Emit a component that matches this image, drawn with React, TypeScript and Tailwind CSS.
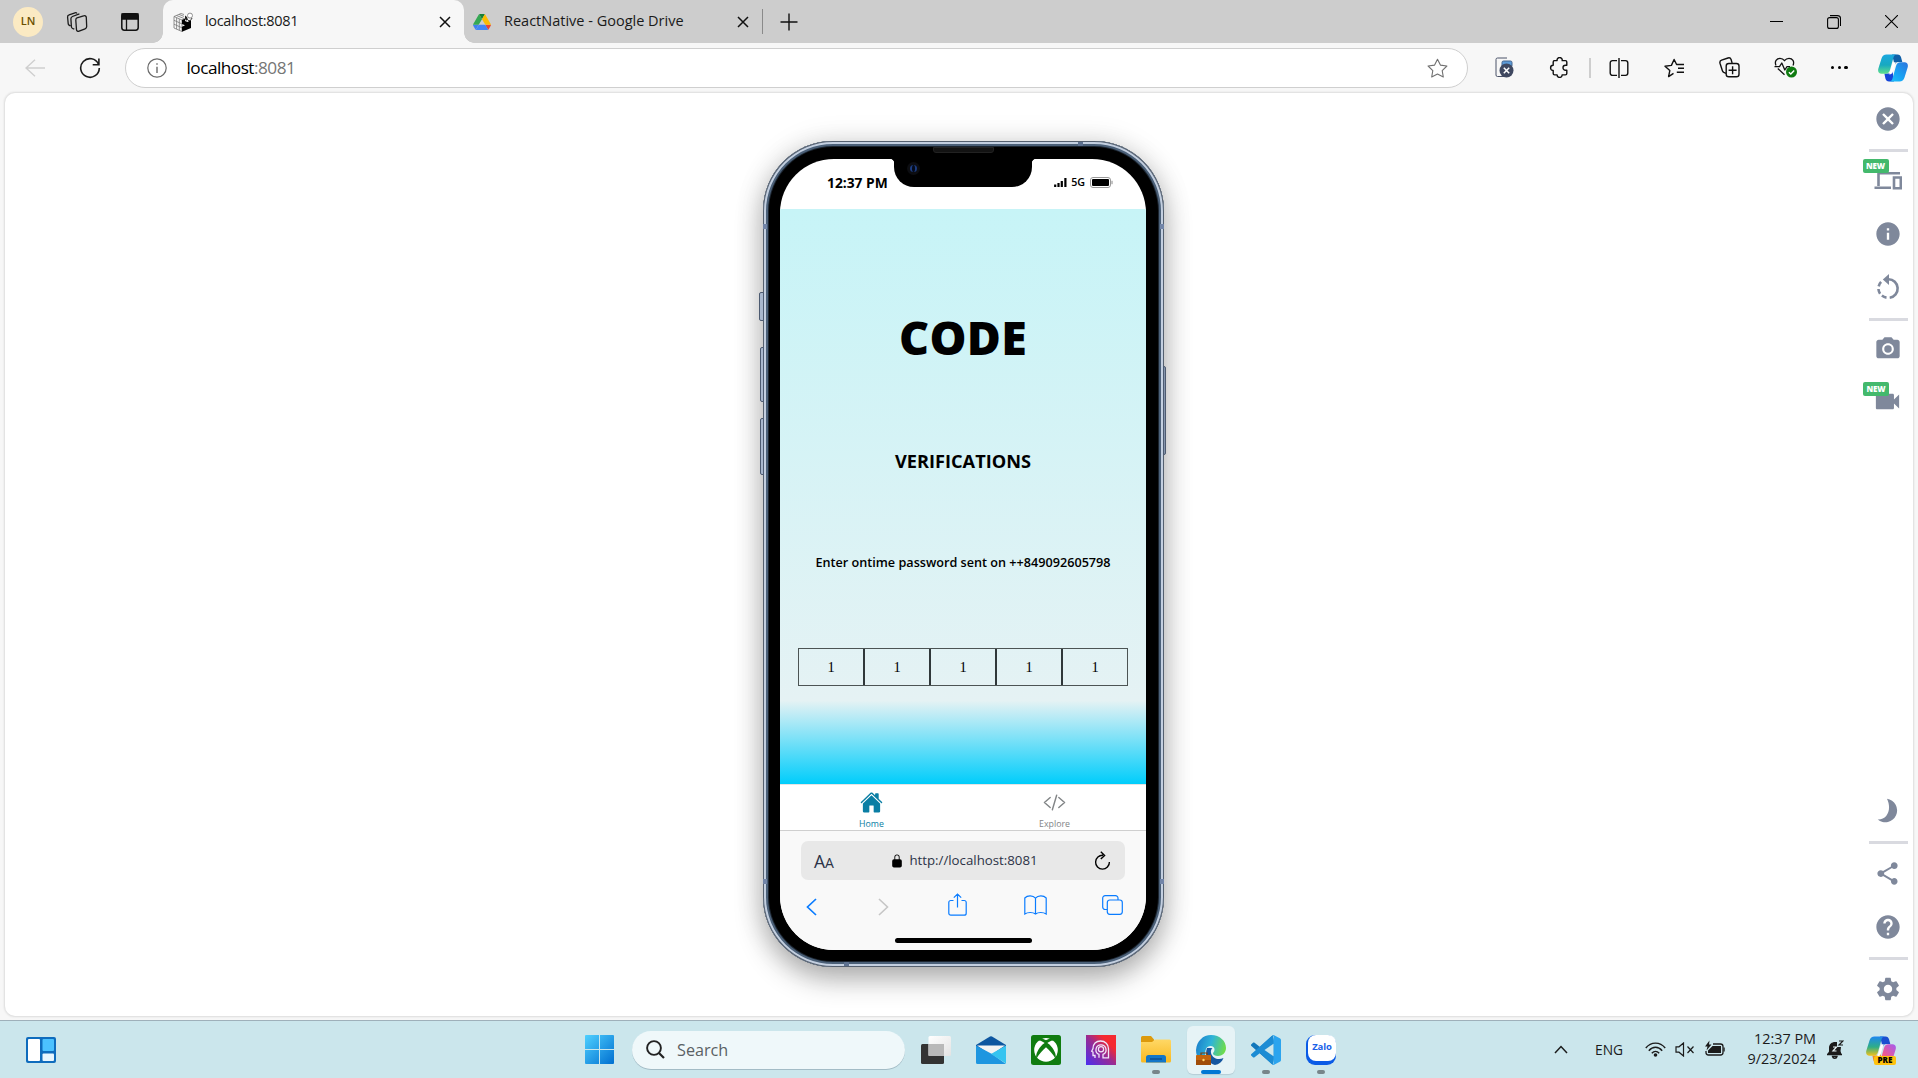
import React from "react";
import { MdCancel, MdInfo, MdCameraAlt, MdVideocam, MdShare, MdHelp, MdSettings } from "react-icons/md";
import { IoHome, IoCodeSlashOutline, IoLockClosed } from "react-icons/io5";

type SvgProps = { w: number; h: number; vb?: string; className?: string; children: React.ReactNode };
const Svg = ({ w, h, vb, className = "", children }: SvgProps) => (
  <svg width={w} height={h} viewBox={vb ?? `0 0 ${w} ${h}`} fill="none" className={`shrink-0 ${className}`}>
    {children}
  </svg>
);

const Spacer = () => <div className="flex-1" />;

function ExpoFavicon() {
  return (
    <Svg w={20} h={20}>
      <path d="M1 4.5 8 1.500l3 1M1 4.500 9 8v11.500L1 16zM1 8.300l8 3.600M1 12.200l8 3.600M3.600 5.800v11.300M6.300 7v11.400M3.500 3.500 11 6.500M6 2.400l5 2M9 8l3-1.500" stroke="#777" strokeWidth=".8" />
      <path d="M9 8l3.500-1.500L12 9l2.500 1 3.500-2v8l-9 3.800v-5l3-1.500-3-1.300z" fill="#000" />
      <circle cx="17" cy="3.600" r="2.500" fill="#fff" stroke="#777" strokeWidth=".8" />
      <path d="M12 3.500 14 5l1 3-2 .5-1-2z" fill="#222" />
      <path d="M15 8.300c1.200.8 3.400.2 4-2.300" stroke="#333" strokeWidth="1" />
    </Svg>
  );
}

function TabBar() {
  return (
    <div className="flex h-[43px] items-center bg-[#cdcdcd]">
      <div className="ml-[13px] flex size-[30px] items-center justify-center rounded-full bg-[#fbeac3] text-[11px] font-semibold text-[#6b5000]">LN</div>
      <Svg w={22} h={22} className="ml-[23px] mr-px">
        <path d="M11 6.200 17.500 4.400a1.800 1.800 0 0 1 2.800 1.400l.4 9.200a2.400 2.400 0 0 1-1.600 2.200l-6 2.400a1.800 1.800 0 0 1-2.600-1.500L9.800 8.700A2.600 2.600 0 0 1 11 6.200Z M8.300 17.600 6.600 16.900a2 2 0 0 1-1.200-1.700L4.900 7.200a2.400 2.400 0 0 1 1.500-2.300l7-2.600M4.400 14.300l-1.300-.8a2 2 0 0 1-.9-1.500L1.600 5.600a2.200 2.200 0 0 1 1.500-2.300L9 1.200a1.800 1.800 0 0 1 2 .7" stroke="#1b1b1b" strokeWidth="1.300" transform="translate(0 .6)" />
      </Svg>
      <Svg w={18} h={18} className="ml-[32px]">
        <rect x=".8" y=".8" width="16.400" height="16.400" rx="2.600" stroke="#111" strokeWidth="1.500" />
        <path d="M1 1h16v5H1zM5.500 5.500V17" fill="#111" stroke="#111" strokeWidth="1.300" />
      </Svg>
      <div className="relative ml-6 flex h-full w-[301px] items-center rounded-t-[10px] bg-[#f7f7f7] pl-[10px] pr-[13px]">
        <div className="absolute -left-2.5 bottom-0 size-2.5 bg-[radial-gradient(circle_at_0_0,transparent_9.5px,#f7f7f7_10px)]" />
        <div className="absolute -right-2.5 bottom-0 size-2.5 bg-[radial-gradient(circle_at_100%_0,transparent_9.5px,#f7f7f7_10px)]" />
        <ExpoFavicon />
        <span className="ml-3 mb-px text-[14.5px] tracking-[-0.33px] text-[#1a1a1a]">localhost:8081</span>
        <Spacer />
        <Svg w={12} h={12}><path d="m1 1 10 10M11 1 1 11" stroke="#111" strokeWidth="1.500" /></Svg>
      </div>
      <Svg w={18} h={16} vb="0 0 87.3 78" className="ml-[9px]">
        <path d="m6.600 66.850 3.850 6.650c.8 1.400 1.950 2.500 3.300 3.300l13.750-23.800H0c0 1.550.4 3.100 1.200 4.500z" fill="#3f7ff0" />
        <path d="M43.650 25 29.900 1.200c-1.350.8-2.500 1.900-3.300 3.300L1.200 48.500A9 9 0 0 0 0 53h27.500z" fill="#34a853" />
        <path d="M73.550 76.800c1.350-.8 2.500-1.900 3.300-3.300l1.600-2.750L86.100 57.500c.8-1.400 1.200-2.950 1.200-4.500H59.800l5.850 11.500z" fill="#ea4335" />
        <path d="M43.650 25 57.400 1.200C56.050.4 54.500 0 52.900 0H34.400c-1.600 0-3.150.45-4.500 1.200z" fill="#188038" />
        <path d="M59.800 53H27.500L13.750 76.800c1.350.8 2.900 1.200 4.500 1.200h50.800c1.600 0 3.150-.45 4.500-1.200z" fill="#4285f4" />
        <path d="m73.400 26.500-12.700-22c-.8-1.400-1.950-2.500-3.300-3.300L43.650 25 59.800 53h27.450c0-1.550-.4-3.100-1.200-4.500z" fill="#fbbc04" />
      </Svg>
      <span className="mb-px ml-[13px] w-[180px] whitespace-nowrap text-[14.5px] text-[#1a1a1a]">ReactNative - Google Drive</span>
      <Svg w={12} h={12} className="ml-[53px]"><path d="m1 1 10 10M11 1 1 11" stroke="#111" strokeWidth="1.500" /></Svg>
      <div className="ml-[13px] h-[25px] w-px bg-[#8a8a8a]" />
      <Svg w={18} h={18} className="ml-[17px]"><path d="M9 .5v17M.5 9h17" stroke="#111" strokeWidth="1.400" /></Svg>
      <Spacer />
      <Svg w={13} h={13}><path d="M0 6.500h13" stroke="#000" strokeWidth="1" /></Svg>
      <Svg w={14} h={14} className="ml-[44px]">
        <rect x=".6" y="2.600" width="10.800" height="10.800" rx="2" stroke="#000" strokeWidth="1.100" />
        <path d="M3 .6h7.500a3 3 0 0 1 3 3V11" stroke="#000" strokeWidth="1.100" />
      </Svg>
      <Svg w={13} h={13} className="ml-[44px] mr-[20px]"><path d="m0 0 13 13M13 0 0 13" stroke="#000" strokeWidth="1.100" /></Svg>
    </div>
  );
}

function Copilot({ pre = false }: { pre?: boolean }) {
  const id = pre ? "p" : "t";
  return (
    <Svg w={30} h={28} vb="0 0 30 28">
      <defs>
        <linearGradient id={`${id}a`} x1="0" y1="0" x2="0" y2="1">
          <stop stopColor={pre ? "#1d86f0" : "#1ba8e0"} /><stop offset=".55" stopColor={pre ? "#2fae86" : "#18a9c0"} /><stop offset="1" stopColor={pre ? "#f2c21a" : "#5fe08c"} />
        </linearGradient>
        <linearGradient id={`${id}b`} x1="1" y1="0" x2="0" y2="1">
          <stop stopColor={pre ? "#a35cf0" : "#2c74dd"} /><stop offset=".6" stopColor={pre ? "#f35a8c" : "#16a6f5"} /><stop offset="1" stopColor={pre ? "#ff9a50" : "#1ec5fa"} />
        </linearGradient>
      </defs>
      <path d="M14 .5h5.500c2 0 3 1.200 3.600 3l1.200 4.500h-4c-2 0-3 1-3.600 3z" fill={pre ? "#1a4fd0" : "#0f5fa8"} />
      <path d="M16 27.500h-5c-2 0-3-1.200-3.600-3L6.400 19.500h4.500c2 0 3-1 3.600-3z" fill={pre ? "#f08a2a" : "#1746d8"} />
      <path d="M8.500.5H19c-2 0-3 1.300-3.500 3L12 16c-.6 2.300-2 3.700-4.300 3.700H3.500C.8 19.700-.4 17.500.3 14.800L3.500 4.500C4.300 2 6 .5 8.500.5Z" fill={`url(#${id}a)`} />
      <path d="M21.500 27.500H11c2 0 3-1.300 3.500-3L18 12c.6-2.300 2-3.700 4.300-3.700h4.200c2.700 0 3.900 2.200 3.200 4.900L26.500 23.500c-.8 2.500-2.500 4-5 4Z" fill={`url(#${id}b)`} />
      <path d="m17.800 8.300-1.300 0c-1.300.3-2 1.300-2.400 2.700L12 18.500c-.3.800-.7 1.400-1.300 1.700h2c1.200-.3 1.800-1.300 2.200-2.700l2-7c.3-1 .5-1.600.9-2.200Z" fill="#fff" />
    </Svg>
  );
}

function Toolbar() {
  return (
    <div className="flex h-[49px] items-center bg-[#f7f7f7]">
      <Svg w={20} h={18} className="ml-[25px]"><path d="M10 .8 1 9l9 8.200M1 9h19" stroke="#cfcfcf" strokeWidth="1.400" /></Svg>
      <Svg w={22} h={22} className="ml-[34px]">
        <path d="M19.500 7.200A9.300 9.300 0 1 0 20.300 11M19.900 1.500v6.300h-6.200" stroke="#1a1a1a" strokeWidth="1.600" />
      </Svg>
      <div className="ml-[24px] mt-px flex h-10 w-[1343px] items-center rounded-full border border-[#cfcfcf] bg-white pl-[21px] pr-[19px]">
        <Svg w={20} h={20}>
          <circle cx="10" cy="10" r="9.200" stroke="#6a6a6a" strokeWidth="1.200" />
          <path d="M10 8.800V15M10 5.200v1.600" stroke="#6a6a6a" strokeWidth="1.400" />
        </Svg>
        <span className="ml-[19.5px] mb-px text-[17.2px] tracking-[-0.5px] text-black">localhost<span className="text-[#767676]">:8081</span></span>
        <Spacer />
        <Svg w={21} h={20} vb="0 0 21 20"><path d="m10.500 1.200 2.900 5.900 6.500.9-4.700 4.600 1.100 6.400-5.800-3-5.800 3 1.100-6.400L1.100 8l6.500-.9z" stroke="#707070" strokeWidth="1.100" strokeLinejoin="round" /></Svg>
      </div>
      <Svg w={19} h={21} className="ml-[27px]">
        <path d="M10 19.500H2.500a1.500 1.500 0 0 1-1.500-1.500V2.500A1.500 1.500 0 0 1 2.500 1H12" stroke="#4a5268" strokeWidth="1" />
        <rect x="7" y="4" width="10" height="6" rx="1.500" fill="#5c9bd8" stroke="#41628c" />
        <circle cx="11.500" cy="13.500" r="7" fill="#3f4860" />
        <path d="m8.800 10.800 5.400 5.400m0-5.400-5.400 5.400" stroke="#fff" strokeWidth="1.500" />
      </Svg>
      <Svg w={20} h={21} className="ml-[35px]">
        <path d="M4.500 3.600h3.600a2.600 2.600 0 1 1 5.100 0h3.200a1.400 1.400 0 0 1 1.400 1.400v3.200h-1.300a2.500 2.500 0 0 0 0 5h1.300v3.300a1.400 1.400 0 0 1-1.400 1.400h-3.300a2.500 2.500 0 1 1-5 0H5.600a1.400 1.400 0 0 1-1.400-1.400v-3a2.600 2.600 0 1 1 0-5.200V5a1.400 1.400 0 0 1 1.400-1.400" stroke="#111" strokeWidth="1.400" strokeLinejoin="round" />
      </Svg>
      <div className="ml-[20px] h-5 w-[2px] bg-[#cecece]" />
      <Svg w={20} h={20} className="ml-[18px]">
        <path d="M8 2.600H3.500A2.300 2.300 0 0 0 1.200 4.900v10.200a2.300 2.300 0 0 0 2.300 2.300H8M12 2.600h4.500a2.300 2.300 0 0 1 2.300 2.300v10.200a2.300 2.300 0 0 1-2.300 2.300H12M10 0v20" stroke="#111" strokeWidth="1.400" />
      </Svg>
      <Svg w={21} h={20} className="ml-[35px]">
        <path d="M9.500 15.300 4.600 18.600l1.200-6L1 8.200l6.400-.8L10.100 1.500l2.500 5H20M14 10.300h6M12.800 14.200H20" stroke="#111" strokeWidth="1.400" strokeLinejoin="round" />
      </Svg>
      <Svg w={21} h={21} className="ml-[34px]">
        <rect x="7.200" y="6.500" width="12.800" height="13.300" rx="2.600" stroke="#111" strokeWidth="1.400" />
        <path d="M13.600 9.200v8M9.600 13.200h8M7 16.300 4.800 15.400A3 3 0 0 1 3.400 13.700L1 6.200A2.500 2.500 0 0 1 2.600 3.200L9 1a2.500 2.500 0 0 1 3.100 1.500l1 3.500" stroke="#111" strokeWidth="1.400" />
      </Svg>
      <Svg w={24} h={21} className="ml-[34px]">
        <path d="M2 8.500C.2 4.500 2.700 1.300 6 1.300c2 0 3.500 1 4.500 2.400 1-1.400 2.500-2.400 4.500-2.400 3.400 0 5.800 3.200 4 7.200M3.800 11.500l6.700 6.300M.5 9.700h5L7.800 6l3 7 2.200-3.300h3" stroke="#111" strokeWidth="1.300" strokeLinejoin="round" />
        <circle cx="17.500" cy="15" r="5.500" fill="#0f7b10" />
        <path d="m14.900 15.200 1.900 1.800 3.400-3.600" stroke="#fff" strokeWidth="1.400" />
      </Svg>
      <div className="ml-[33px] flex gap-[3.5px]">
        <i className="size-[3.2px] rounded-full bg-black" /><i className="size-[3.2px] rounded-full bg-black" /><i className="size-[3.2px] rounded-full bg-black" />
      </div>
      <Spacer />
      <div className="mr-[10px]"><Copilot /></div>
    </div>
  );
}

function Notch() {
  return (
    <div className="absolute left-[114px] top-0 h-[28px] w-[138px] rounded-b-[20px] bg-black">
      <div className="absolute -left-[3px] top-0 size-[3px] bg-[radial-gradient(circle_at_0_100%,transparent_2.5px,#000_3px)]" />
      <div className="absolute -right-[3px] top-0 size-[3px] bg-[radial-gradient(circle_at_100%_100%,transparent_2.5px,#000_3px)]" />
      <div className="absolute left-[13px] top-[3px] flex size-[13px] items-center justify-center rounded-full bg-[#0c0d11]">
        <div className="size-[7px] rounded-full border-x-2 border-[#1c3c80] bg-[#050a18]" />
      </div>
    </div>
  );
}

function Screen() {
  return (
    <div className="relative flex h-[791px] w-[366px] flex-col overflow-hidden rounded-[54px] bg-white">
      <Notch />
      <div className="flex h-[50px] shrink-0 items-center pb-[3px] pl-[47px] pr-[33px] text-black">
        <span className="pt-px text-[13.8px] font-bold">12:37 PM</span>
        <Spacer />
        <Svg w={13} h={9}><path d="M1.200 9V6.500M4.500 9V5M7.800 9V3M11.400 9V0" stroke="#000" strokeWidth="2.200" /></Svg>
        <span className="ml-[4px] text-[10.7px] font-semibold">5G</span>
        <Svg w={23} h={11} className="ml-[5px]">
          <rect x=".5" y=".5" width="20" height="10" rx="2.500" stroke="#999" />
          <rect x="2" y="2" width="17" height="7" rx="1" fill="#000" />
          <path d="M22 3.800v3.400" stroke="#888" />
        </Svg>
      </div>
      <div className="flex h-[575px] shrink-0 flex-col items-center bg-[linear-gradient(#c7f4f7_0%,#e5f2f4_85.5%,#00cdfb_100%)] pt-[98px] text-black">
        <h1 className="flex h-[62px] items-center text-[46.5px] font-extrabold tracking-[0.3px]">CODE</h1>
        <h2 className="mt-[81px] flex h-6 items-center text-[18.2px] font-bold">VERIFICATIONS</h2>
        <p className="mt-[78px] flex h-5 items-center text-[12.65px] font-semibold">Enter ontime password sent on ++849092605798</p>
        <div className="mt-[76px] flex h-[38px] w-[330px] border border-[#4c5454] font-['Liberation_Serif',serif] text-[14.5px]">
          {[0, 1, 2, 3, 4].map((i) => (
            <div key={i} className="flex flex-1 items-center justify-center border-r-2 border-[#30383a] pt-px last:border-r-0">1</div>
          ))}
        </div>
      </div>
      <div className="flex h-[46px] shrink-0 border-t border-[#e4e4e4] bg-white text-[8.8px] leading-[12px]">
        <div className="flex flex-1 flex-col items-center pt-[6px] text-[#0a7ea4]"><IoHome size={25} /><span className="mt-[4px]">Home</span></div>
        <div className="flex flex-1 flex-col items-center pt-[6px] text-[#828587]"><IoCodeSlashOutline size={25} /><span className="mt-[4px]">Explore</span></div>
      </div>
      <div className="flex flex-1 flex-col items-center border-t border-[#cfcfcf] bg-[#f9f9f9]">
        <div className="mt-[10px] flex h-[39px] w-[324px] items-center rounded-[7px] bg-[#e8e8e8] pl-[13px] pr-[14px] text-[#2c3347]">
          <span className="pt-px text-[17.5px]">A<span className="text-[14px]">A</span></span>
          <Spacer />
          <IoLockClosed size={14} className="ml-[3px] text-black" />
          <span className="ml-[5px] pt-px text-[13.25px]">http://localhost:8081</span>
          <Spacer />
          <Svg w={17} h={20} className="ml-[3px]"><path d="M9 4.300A6.900 6.900 0 1 0 15.400 11M6.800.8l3.800 3.600-3.800 3.700" stroke="#000" strokeWidth="1.400" /></Svg>
        </div>
        <div className="mt-[13px] flex h-6 w-[318px] items-center pl-[2px] text-[#0a7cff]">
          <Svg w={11} h={18} className="mt-[3px]"><path d="M10 1 1.500 9l8.500 8" stroke="currentColor" strokeWidth="1.700" /></Svg>
          <Svg w={11} h={18} className="ml-[61px] mt-[3px]"><path d="m1 1 8.500 8L1 17" stroke="#c6c6c6" strokeWidth="1.600" /></Svg>
          <Svg w={19} h={23} className="-mt-[2px] ml-[59px]"><path d="M5.500 7.500H2.800A2 2 0 0 0 .8 9.500v10.700a2 2 0 0 0 2 2h13.400a2 2 0 0 0 2-2V9.500a2 2 0 0 0-2-2h-2.700M9.500 14.500V1M5.800 4.700 9.500 1l3.700 3.700" stroke="currentColor" strokeWidth="1.200" /></Svg>
          <Svg w={23} h={20} className="ml-[57px]"><path d="M11.500 3.200C9 .2 3.500.2.800 3v16c3-2 8-2 10.700 0 2.700-2 7.700-2 10.700 0V3c-2.700-2.800-8.200-2.800-10.700.2Zm0 0V19" stroke="currentColor" strokeWidth="1.200" /></Svg>
          <Svg w={21} h={20} className="-mt-px ml-[55px]"><rect x="5.300" y="5" width="15" height="14.300" rx="2.500" stroke="currentColor" strokeWidth="1.200" /><path d="M5 14.500H3.200A2.500 2.500 0 0 1 .7 12V3.200A2.500 2.500 0 0 1 3.200.7h10.300A2.500 2.500 0 0 1 16 3.200V5" stroke="currentColor" strokeWidth="1.200" /></Svg>
        </div>
        <div className="mt-[21px] h-[5px] w-[137px] rounded-full bg-black" />
      </div>
    </div>
  );
}

function Phone() {
  return (
    <div className="relative mt-[48px] h-[826px] w-[401px] rounded-[70px] bg-black pl-[17px] pt-[18px] shadow-[inset_0_0_0_1px_#55606f,inset_0_0_0_3px_#c3cfe0,inset_0_0_0_5px_#4b6078,inset_0_0_0_6px_#1c2530,0_0_30px_rgba(0,0,0,0.1),0_12px_28px_rgba(0,0,0,0.3)]">
      <div className="absolute -left-[4px] top-[151px] h-[29px] w-[5px] rounded-l-[2px] border border-[#4c5a70] bg-[#a9b8ce]" />
      <div className="absolute -left-[3px] top-[206px] h-[55px] w-[4px] rounded-l-[2px] border border-[#4c5a70] bg-[#a9b8ce]" />
      <div className="absolute -left-[3px] top-[277px] h-[57px] w-[4px] rounded-l-[2px] border border-[#4c5a70] bg-[#a9b8ce]" />
      <div className="absolute -right-[2px] top-[225px] h-[89px] w-[3px] rounded-r-[2px] border border-[#4c5a70] bg-[#8595ad]" />
      <div className="absolute left-0 top-[83px] h-[5px] w-[4px] bg-[#7285a8]" />
      <div className="absolute right-0 top-[83px] h-[5px] w-[4px] bg-[#7285a8]" />
      <div className="absolute bottom-[83px] left-0 h-[5px] w-[4px] bg-[#7285a8]" />
      <div className="absolute bottom-[83px] right-0 h-[5px] w-[4px] bg-[#7285a8]" />
      <div className="absolute left-[315px] top-[1px] h-[4px] w-[5px] bg-[#5d7190]" />
      <div className="absolute bottom-[1px] left-[81px] h-[4px] w-[5px] bg-[#5d7190]" />
      <div className="absolute left-[170px] top-[6px] h-[6px] w-[61px] rounded-b-[3px] border border-[#222] bg-[#131313]" />
      <Screen />
    </div>
  );
}

const Rule = ({ className = "" }: { className?: string }) => <div className={`h-[3px] w-[39px] shrink-0 bg-[#d9dae0] ${className}`} />;
const NewBadge = ({ className = "" }: { className?: string }) => (
  <span className={`absolute flex h-[14px] w-[26px] items-center justify-center rounded-[2px] bg-[#43b96c] text-[8px] font-extrabold tracking-[-0.2px] text-white ${className}`}>NEW</span>
);

function Sidebar() {
  return (
    <div className="flex w-[39px] flex-col items-center text-[#7f889b] [&>svg]:mr-[2px]">
      <MdCancel size={28} className="mt-[12px] shrink-0" />
      <Rule className="mt-[16px]" />
      <div className="relative mt-[19px] mr-[2px]">
        <Svg w={28} h={20}><path d="M4.500 15V2.200H26M.5 16.700H17M20 6.500h6.800v10.700H20z" stroke="currentColor" strokeWidth="2.600" /></Svg>
        <NewBadge className="-left-[11px] -top-[12px]" />
      </div>
      <MdInfo size={28} className="mt-[29px] shrink-0" />
      <Svg w={24} h={26} className="mt-[26px]">
        <path d="M12.500 5.200a9.300 9.300 0 0 1 1.200 18.500" stroke="currentColor" strokeWidth="2.600" />
        <path d="M10.500 23.600A9.300 9.300 0 0 1 5.200 7.800" stroke="currentColor" strokeWidth="2.600" strokeDasharray="5 2.600" />
        <path d="M13 0v11L6.800 5.500z" fill="currentColor" />
      </Svg>
      <Rule className="mt-[18px]" />
      <MdCameraAlt size={28} className="mt-[14px] shrink-0" />
      <div className="relative mt-[23px] mr-[2px]">
        <MdVideocam size={31} />
        <NewBadge className="-left-[9px] -top-[4px]" />
      </div>
      <Spacer />
      <Svg w={22} h={25}><path d="M10 .8a11.800 11.800 0 1 1-9.300 20.700C10.500 22 15 11 10 .8Z" fill="currentColor" /></Svg>
      <Rule className="mt-[18px]" />
      <MdShare size={27} className="mt-[16px] shrink-0" />
      <MdHelp size={28} className="mt-[26px] shrink-0" />
      <Rule className="mt-[16px]" />
      <MdSettings size={28} className="mb-[13px] mt-[15px] shrink-0" />
    </div>
  );
}

const AppSlot = ({ children, active = false, run = false }: { children: React.ReactNode; active?: boolean; run?: boolean }) => (
  <div className={`relative flex size-[48px] items-center justify-center rounded-md ${active ? "bg-[#e6f3f6] shadow-[0_1px_1px_#b5cdd6]" : ""}`}>
    {children}
    {run && <div className={`absolute bottom-0 h-1 rounded-full ${active ? "w-5 bg-[#0078d4]" : "w-2 bg-[#77858a]"}`} />}
  </div>
);

function Apps() {
  return (
    <div className="flex gap-[7px]">
      <AppSlot>
        <Svg w={30} h={28}>
          <defs><linearGradient id="tv" x1="0" y1="0" x2="1" y2="1"><stop stopColor="#fff" /><stop offset="1" stopColor="#e3e3e3" /></linearGradient></defs>
          <rect x="0" y="8" width="23" height="20" rx="1.500" fill="#333" />
          <rect x="7.500" y="0" width="22.500" height="20" rx="1.500" fill="url(#tv)" />
          <path d="M7.500 8H23v12H7.500z" fill="#b9b9b9" />
        </Svg>
      </AppSlot>
      <AppSlot>
        <Svg w={30} h={28}>
          <path d="M0 9 14 .5a2 2 0 0 1 2 0L30 9v8H0z" fill="#0d56a0" />
          <path d="M1 9.500h28L15 19z" fill="#f4f4f4" />
          <path d="M0 9.500 16 18l14 10H1.500A1.500 1.500 0 0 1 0 26.500z" fill="#1e96e0" />
          <path d="M30 9.500 15 18l15 9.500z" fill="#36c4f0" />
        </Svg>
      </AppSlot>
      <AppSlot>
        <Svg w={30} h={30}>
          <rect width="30" height="30" rx="2.500" fill="#107c10" />
          <circle cx="15" cy="15" r="11.800" fill="#fff" />
          <path d="M6 5.800C9 4.500 12.500 7 15 9c2.500-2 6-4.500 9-3.200-1.500-2-5-2.800-9-2.800s-7 .8-9 2.800Z" fill="#107c10" />
          <path d="M11.300 3.700c1.400.2 2.800 1 3.700 1.600.9-.6 2.300-1.400 3.700-1.600a12 12 0 0 0-7.400 0" fill="#fff" />
          <path d="M11.500 9.500C8 13 4 19 5.500 23.500 8 19.500 12 14.800 15 12.300c3 2.500 7 7.200 9.500 11.200C26 19 22 13 18.500 9.500L15 7z" fill="#107c10" />
        </Svg>
      </AppSlot>
      <AppSlot>
        <Svg w={30} h={30}>
          <defs><linearGradient id="ra" x1="0" y1="1" x2="1" y2="0"><stop stopColor="#4a2ff0" /><stop offset=".5" stopColor="#9b2b90" /><stop offset=".75" stopColor="#f52a30" /></linearGradient></defs>
          <rect width="30" height="30" fill="url(#ra)" />
          <path d="M9 23v-2.500H7V17l-1.300-.8L7 13.500C7 9 10 6 14.500 6c4.700 0 8 3.200 8 7.700V22.800H17v-3.500c5-2 3.500-9.500-2-9.500s-7 7.500-2 9.500v3.500" stroke="#f0e6fa" strokeWidth="1.300" />
          <circle cx="15" cy="14.300" r="2.600" stroke="#f0e6fa" strokeWidth="1.200" />
        </Svg>
      </AppSlot>
      <AppSlot run>
        <Svg w={30} h={27}>
          <defs><linearGradient id="fo" x1="0" y1="0" x2="0" y2="1"><stop stopColor="#ffd866" /><stop offset="1" stopColor="#f9b920" /></linearGradient></defs>
          <path d="M0 1.500A1.500 1.500 0 0 1 1.500 0H10l3 3.500V8H0z" fill="#dd9a0c" />
          <path d="M0 6h11l3-2.500h14.500A1.500 1.500 0 0 1 30 5v20a1.500 1.500 0 0 1-1.500 1.500h-27A1.500 1.500 0 0 1 0 25z" fill="url(#fo)" />
          <path d="M5 26.500V21.500a2.500 2.500 0 0 1 2.500-2.500h15a2.500 2.500 0 0 1 2.500 2.500v5z" fill="#1276c8" />
          <path d="M9 23h12" stroke="#0b4c90" strokeWidth="1.400" />
        </Svg>
      </AppSlot>
      <AppSlot active run>
        <Svg w={30} h={30}>
          <defs>
            <linearGradient id="ed" x1="0" y1=".3" x2="1" y2=".5"><stop stopColor="#1b7fcc" /><stop offset=".5" stopColor="#2fb4d8" /><stop offset="1" stopColor="#6fdc4a" /></linearGradient>
          </defs>
          <path d="M11 13c-3 8 2 16 8 17 4-.5 7-3 8.500-7-5 2.500-11 .5-12.500-5-.5-2.500.5-4 1.500-5z" fill="#1657a0" />
          <path d="M0 15C.8 6 7 0 15 0c9 0 15 6 15 13 0 5-4 8-8 8-3 0-5-1-5-2.500 0-1 1.500-1.500 1.500-4 0-2-1.500-3.500-4-3.500-4 0-6 4-5 10H1C.3 19 0 17 0 15Z" fill="url(#ed)" />
          <path d="M5 20.500V18h6v2.500" stroke="#7c3f08" strokeWidth="1.200" />
          <rect x="0" y="20" width="15" height="10" rx=".8" fill="#c4640c" />
          <path d="M0 25h15v5H0z" fill="#a04c08" /><circle cx="7.500" cy="25" r="1.200" fill="#ffd36a" />
        </Svg>
      </AppSlot>
      <AppSlot run>
        <Svg w={30} h={30} vb="0 0 100 100">
          <path d="M72 1 30 40 12 26c-2-1.500-4-1.500-5.500 0L1.400 30.500c-2 1.800-2 4.700 0 6.500L72 99l4-20V20z" fill="#1277bb" />
          <path d="M72 99 30 60 12 74c-2 1.500-4 1.500-5.500 0l-5.100-4.500c-2-1.800-2-4.700 0-6.500L72 1l4 20v60z" fill="#1c8cd4" />
          <path d="M71 99c3 1.500 4 .5 6 0l19-9.500c2.500-1.300 4-3.500 4-6V16.500c0-2.500-1.500-4.700-4-6L77 1c-2-1-4-1-6 0 2.500 0 4 1.500 4 4v90c0 2.500-1.500 4-4 4Z" fill="#2ba4ee" />
          <path d="M75 29 45 50l30 21z" fill="#cbe6ec" />
        </Svg>
      </AppSlot>
      <AppSlot run>
        <div className="flex size-[30px] items-start justify-end rounded-[9px] bg-[#0a5be6]">
          <div className="flex h-[26px] w-[28px] items-center justify-center rounded-[8px] bg-white text-[9.5px] font-bold tracking-[-0.1px] text-[#1a62e8]">Zalo</div>
        </div>
      </AppSlot>
    </div>
  );
}

function Tray() {
  return (
    <div className="flex items-center text-[#1b1b1b]">
      <Svg w={14} h={9}><path d="m1 8 6-6.500L13 8" stroke="#1b1b1b" strokeWidth="1.500" /></Svg>
      <span className="ml-[27px] mt-px w-[29px] text-[13.8px]">ENG</span>
      <Svg w={21} h={15} className="ml-[21px]">
        <path d="M.8 6C6-.5 15-.5 20.200 6M3.800 8.700c4-4.700 9.400-4.700 13.400 0M6.800 11.300c2.300-2.600 5.100-2.600 7.400 0" stroke="#1b1b1b" strokeWidth="1.400" />
        <circle cx="10.500" cy="13" r="1.800" fill="#1b1b1b" />
      </Svg>
      <Svg w={20} h={15} className="ml-[9px]"><path d="M1 4.800v5.400h3L8.500 14V1L4 4.800zM12.500 4.500l6 6.500m0-6.500-6 6.500" stroke="#1b1b1b" strokeWidth="1.200" /></Svg>
      <Svg w={21} h={17} className="-mt-[3px] ml-[10px]">
        <path d="M8 4h7.500A2.500 2.500 0 0 1 18 6.500v6a2.500 2.500 0 0 1-2.500 2.500h-12A2.500 2.500 0 0 1 1 12.500V11" stroke="#1b1b1b" strokeWidth="1.300" />
        <path d="M7.500 6h8.500v7H3v-2.500zM18.500 7.500h1.200v4h-1.200zM4.500.5 0 6.500h2.500L1.500 10.500 6.500 4.500H4z" fill="#1b1b1b" />
      </Svg>
      <div className="ml-[19px] flex w-[71px] flex-col items-end pb-px text-[14.4px] leading-[20px]">
        <span>12:37 PM</span><span className="tracking-[0.05px]">9/23/2024</span>
      </div>
      <Svg w={17} h={20} className="ml-[11px]">
        <path d="M2 8c0-4 3-6 6-6h2v5h4l-.5 4 1 3.500H0l2-3z" fill="#1b1b1b" />
        <path d="M0 14.500h15M5.500 16.500h4.500a2.300 2.300 0 0 1-4.500 0Z" stroke="#1b1b1b" strokeWidth="1.300" />
        <path d="M12 1h4l-4 4h4" stroke="#1b1b1b" strokeWidth="1.200" /><path d="M6 7h3.500L6 11h3.500" stroke="#e7f3f5" strokeWidth="1.200" />
      </Svg>
      <div className="relative ml-[22px] mr-[22px]">
        <Copilot pre />
        <span className="absolute -bottom-px right-0 flex h-[9px] w-[22px] items-center justify-center rounded-[2px] bg-[#ffc20e] text-[8px] font-extrabold text-black">PRE</span>
      </div>
    </div>
  );
}

function Taskbar() {
  return (
    <div className="flex h-[58px] items-center border-t border-[#9fb0ba] bg-[#cbe6ec]">
      <div className="flex w-[585px] pl-[25px]">
        <Svg w={32} h={28}>
          <rect x="1" y="1" width="30" height="26" rx="2" fill="#0f6cbd" />
          <rect x="3" y="3" width="12" height="22" rx="1" fill="#fff" /><rect x="17.500" y="3" width="11.500" height="12" rx="1" fill="#4cc2ff" /><rect x="17.500" y="17.500" width="11.500" height="7.500" rx="1" fill="#e8f6ff" />
        </Svg>
      </div>
      <Svg w={29} h={29}>
        <defs><linearGradient id="wn" x1="0" y1="0" x2="29" y2="29" gradientUnits="userSpaceOnUse"><stop stopColor="#4fd0ff" /><stop offset="1" stopColor="#006fd0" /></linearGradient></defs>
        <path d="M1 0h13v14H0V1a1 1 0 0 1 1-1ZM15 0h13a1 1 0 0 1 1 1v13H15zM0 15h14v14H1a1 1 0 0 1-1-1zM15 15h14v13a1 1 0 0 1-1 1H15z" fill="url(#wn)" />
      </Svg>
      <div className="ml-[18px] flex h-[38px] w-[273px] items-center rounded-full bg-[#eff8fa] pl-[14px] shadow-[0_1px_0_#a3bcc6]">
        <Svg w={19} h={19}><circle cx="8" cy="8" r="6.900" stroke="#222" strokeWidth="1.900" /><path d="m13 13 5 5" stroke="#222" strokeWidth="2.200" /></Svg>
        <span className="ml-[12px] mt-px text-[16.2px] text-[#5a6164]">Search</span>
      </div>
      <div className="ml-[7px]"><Apps /></div>
      <Spacer />
      <Tray />
    </div>
  );
}

export default function App() {
  return (
    <div className="flex h-[1078px] w-[1918px] flex-col overflow-hidden bg-[#f7f7f7] font-['Open_Sans',sans-serif]">
      <TabBar />
      <Toolbar />
      <div className="mx-[5px] mb-[4px] mt-px flex flex-1 justify-between rounded-[10px] bg-white pl-[758px] pr-[5px] shadow-[0_0_2px_1px_#dcdcdc]">
        <Phone />
        <Sidebar />
      </div>
      <Taskbar />
    </div>
  );
}
